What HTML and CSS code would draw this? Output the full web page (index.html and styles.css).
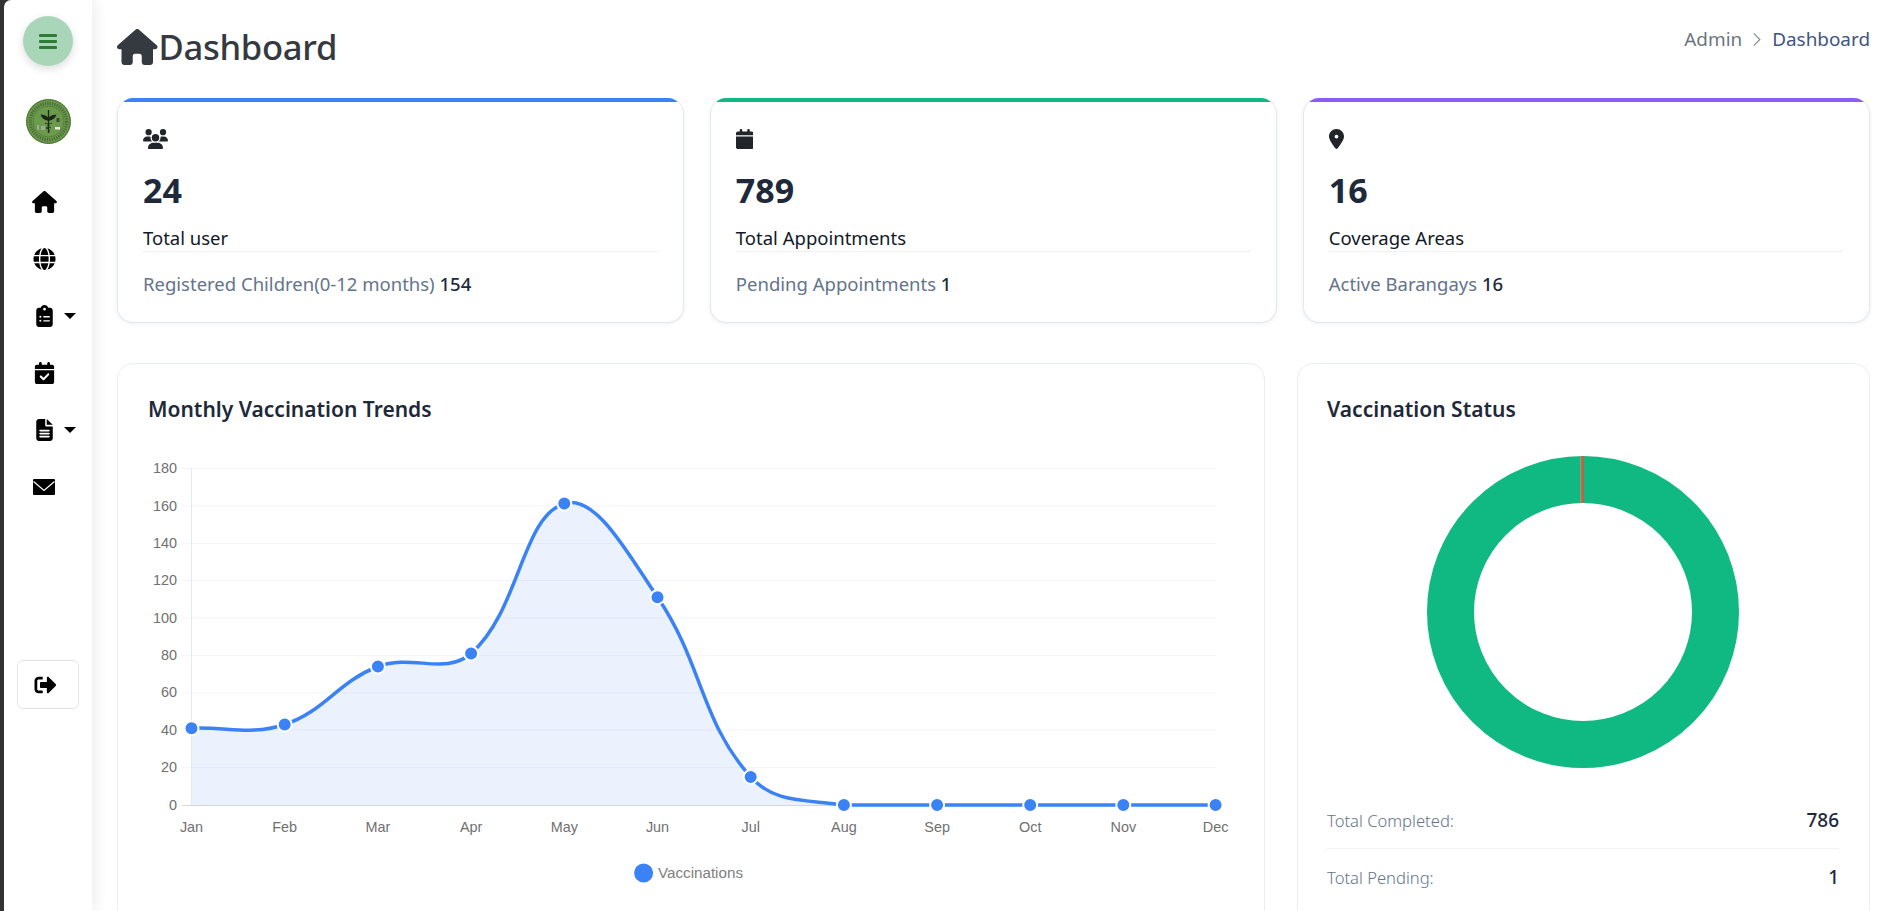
FILE: index.html
```html
<!doctype html>
<html lang="en-US">
<head>
	<meta charset="utf-8">
	<title>Dashboard</title>
	<link rel="stylesheet" href="styles.css">
</head>
<body>
<div class="app">
	<aside class="side">
		<button class="menu-btn"><i></i><i></i><i></i></button>
		<svg class="seal" viewBox="0 0 45 45">
			<circle cx="22.5" cy="22.5" r="22.5" fill="#6b9a4c"/>
			<circle cx="22.5" cy="22.5" r="21.8" fill="none" stroke="#4a6b35" stroke-width=".9"/>
			<circle cx="22.5" cy="22.5" r="18.200" fill="none" stroke="#2f4a26" stroke-width="3.400" stroke-dasharray="1.300 1.100" opacity=".55"/>
			<circle cx="22.5" cy="22.5" r="15.500" fill="#6b9a4c" stroke="#4a6b35" stroke-width=".6"/>
			<path d="M22.5 11v23" stroke="#1c2a18" stroke-width="1.300"/>
			<path d="M14.500 15.500c3 0 5.800 1 8 3c2.200-2 5-3 8-3c-1 3.500-3.500 5.500-8 6.500c-4.500-1-7-3-8-6.500z" fill="#1c2a18"/>
			<path d="M19 24c5 1.500 5 3.500 1 5c3 1 4 2 2.500 4M26 24c-5 1.500-5 3.500-1 5" fill="none" stroke="#1c2a18" stroke-width=".9"/>
			<path d="M11 26h2v5h-2zM15 27h4v4h-4z" fill="#a0ab96"/>
			<path d="M29 28h5v2.500h-5z" fill="#e6ecdd"/>
			<path d="M30.500 19h3v4h-3z" fill="#3a4c31"/>
		</svg>
		<nav class="nav">
			<a><svg class="ico" viewBox="0 0 576 512"><path d="M575.8 255.500c0 18-15 32.100-32 32.100h-32l.7 160.200c0 2.700-.2 5.400-.5 8.100V472c0 22.100-17.900 40-40 40H456c-1.100 0-2.200 0-3.300-.1c-1.400 .1-2.800 .1-4.200 .1H416 392c-22.100 0-40-17.900-40-40V448 384c0-17.700-14.300-32-32-32H256c-17.700 0-32 14.300-32 32v64 24c0 22.100-17.900 40-40 40H160 128.100c-1.500 0-3-.1-4.500-.2c-1.200 .1-2.400 .2-3.600 .2H104c-22.100 0-40-17.900-40-40V360c0-.9 0-1.900 .1-2.800V287.600H32c-18 0-32-14-32-32.100c0-9 3-17 10-24L266.400 8c7-7 15-8 22-8s15 2 21 7L564.800 231.500c8 7 12 15 11 24z"/></svg></a>
			<a><svg class="ico" viewBox="0 0 512 512"><path d="M352 256c0 22.200-1.200 43.600-3.300 64H163.300c-2.200-20.400-3.300-41.800-3.300-64s1.200-43.600 3.300-64H348.700c2.200 20.400 3.300 41.800 3.300 64zm28.800-64H503.900c5.300 20.500 8.100 41.900 8.100 64s-2.800 43.500-8.100 64H380.800c2.100-20.600 3.200-42 3.200-64s-1.100-43.400-3.200-64zm112.600-32H376.700c-10-63.900-29.800-117.400-55.300-151.600c78.300 20.700 142 77.500 171.900 151.600zm-149.100 0H167.700c6.100-36.400 15.500-68.600 27-94.700c10.500-23.600 22.200-40.700 33.500-51.500C239.400 3.200 248.700 0 256 0s16.600 3.200 27.800 13.800c11.300 10.800 23 27.900 33.500 51.500c11.600 26 20.900 58.200 27 94.700zm-209 0H18.600C48.600 85.900 112.200 29.100 190.600 8.400C165.100 42.600 145.300 96.100 135.300 160zM8.100 192H131.200c-2.100 20.600-3.200 42-3.200 64s1.100 43.400 3.200 64H8.100C2.800 299.500 0 278.100 0 256s2.800-43.500 8.100-64zM194.700 446.600c-11.600-26-20.900-58.200-27-94.600H344.300c-6.100 36.400-15.500 68.600-27 94.600c-10.500 23.600-22.200 40.700-33.500 51.500C272.600 508.800 263.300 512 256 512s-16.600-3.200-27.800-13.800c-11.300-10.800-23-27.900-33.500-51.500zM135.300 352c10 63.900 29.800 117.400 55.300 151.600C112.200 482.900 48.600 426.100 18.600 352H135.300zm358.100 0c-30 74.100-93.600 130.900-171.900 151.600c25.500-34.200 45.200-87.700 55.300-151.600H493.400z"/></svg></a>
			<a><svg class="ico" viewBox="0 0 384 512"><path d="M192 0c-41.800 0-77.400 26.700-90.500 64H64C28.700 64 0 92.700 0 128V448c0 35.300 28.700 64 64 64H320c35.300 0 64-28.700 64-64V128c0-35.300-28.700-64-64-64H282.500C269.400 26.700 233.800 0 192 0zm0 64a32 32 0 1 1 0 64 32 32 0 1 1 0-64zM72 272a24 24 0 1 1 48 0 24 24 0 1 1 -48 0zm104-16H304c8.800 0 16 7.200 16 16s-7.200 16-16 16H176c-8.800 0-16-7.200-16-16s7.200-16 16-16zM72 368a24 24 0 1 1 48 0 24 24 0 1 1 -48 0zm88 0c0-8.800 7.200-16 16-16H304c8.800 0 16 7.200 16 16s-7.200 16-16 16H176c-8.800 0-16-7.200-16-16z"/></svg><b class="caret"></b></a>
			<a><svg class="ico" viewBox="0 0 448 512"><path d="M128 0c17.700 0 32 14.300 32 32V64H288V32c0-17.700 14.300-32 32-32s32 14.300 32 32V64h48c26.500 0 48 21.500 48 48v48H0V112C0 85.500 21.500 64 48 64H96V32c0-17.700 14.300-32 32-32zM0 192H448V464c0 26.500-21.500 48-48 48H48c-26.500 0-48-21.500-48-48V192zM329 305c9.400-9.400 9.400-24.600 0-33.900s-24.600-9.400-33.900 0l-95 95-47-47c-9.400-9.400-24.600-9.400-33.900 0s-9.400 24.600 0 33.900l64 64c9.400 9.400 24.600 9.400 33.900 0L329 305z"/></svg></a>
			<a><svg class="ico" viewBox="0 0 384 512"><path d="M64 0C28.700 0 0 28.700 0 64V448c0 35.300 28.700 64 64 64H320c35.300 0 64-28.700 64-64V176H240c-17.700 0-32-14.300-32-32V0H64zM244 0V132H384L244 0zM88 250H296c11 0 20 9 20 20s-9 20-20 20H88c-11 0-20-9-20-20s9-20 20-20zm0 70H296c11 0 20 9 20 20s-9 20-20 20H88c-11 0-20-9-20-20s9-20 20-20zm0 70H296c11 0 20 9 20 20s-9 20-20 20H88c-11 0-20-9-20-20s9-20 20-20z"/></svg><b class="caret"></b></a>
			<a><svg class="mail" viewBox="0 0 22 16"><rect width="22" height="16" rx="1"/><path d="M.5 2.500L11 11.500L21.500 2.500" fill="none" stroke="#fff" stroke-width="1.200"/></svg></a>
		</nav>
		<button class="logout"><svg class="ico" viewBox="0 0 512 512"><path d="M497 273L329 441c-15 15-41 4.500-41-17v-96H152c-13.300 0-24-10.700-24-24v-96c0-13.300 10.700-24 24-24h136V88c0-21.400 25.900-32 41-17l168 168c9.300 9.400 9.300 24.600 0 34zM192 436v-40c0-6.600-5.400-12-12-12H96c-17.700 0-32-14.300-32-32V160c0-17.700 14.300-32 32-32h84c6.600 0 12-5.400 12-12V76c0-6.600-5.400-12-12-12H96c-53 0-96 43-96 96v192c0 53 43 96 96 96h84c6.600 0 12-5.400 12-12z"/></svg></button>
	</aside>

	<main class="main">
		<header class="head">
			<h1><svg viewBox="0 0 576 512"><path d="M575.8 255.500c0 18-15 32.100-32 32.100h-32l.7 160.200c0 2.700-.2 5.400-.5 8.100V472c0 22.100-17.900 40-40 40H456c-1.100 0-2.200 0-3.300-.1c-1.400 .1-2.800 .1-4.200 .1H416 392c-22.100 0-40-17.900-40-40V448 384c0-17.700-14.300-32-32-32H256c-17.700 0-32 14.300-32 32v64 24c0 22.100-17.900 40-40 40H160 128.100c-1.500 0-3-.1-4.500-.2c-1.200 .1-2.400 .2-3.600 .2H104c-22.100 0-40-17.900-40-40V360c0-.9 0-1.900 .1-2.800V287.600H32c-18 0-32-14-32-32.100c0-9 3-17 10-24L266.400 8c7-7 15-8 22-8s15 2 21 7L564.800 231.500c8 7 12 15 11 24z"/></svg>Dashboard</h1>
			<div class="crumb">
				<span>Admin</span>
				<svg viewBox="0 0 10 16"><path d="M1.500 1.500L8 8L1.500 14.500" fill="none" stroke="#8b9299" stroke-width="1.400"/></svg>
				<a>Dashboard</a>
			</div>
		</header>

		<section class="stats">
			<div class="stat blue">
				<svg class="stat-ico" viewBox="0 0 640 512"><path d="M144 0a80 80 0 1 1 0 160A80 80 0 1 1 144 0zM512 0a80 80 0 1 1 0 160A80 80 0 1 1 512 0zM0 298.700C0 239.800 47.800 192 106.700 192h42.700c15.900 0 31 3.500 44.600 9.700c-1.300 7.200-1.900 14.700-1.900 22.300c0 38.200 16.800 72.500 43.300 96c-.2 0-.4 0-.7 0H21.300C9.600 320 0 310.400 0 298.700zM405.300 320c-.2 0-.4 0-.7 0c26.600-23.500 43.300-57.800 43.300-96c0-7.600-.7-15-1.900-22.300c13.600-6.300 28.700-9.700 44.600-9.700h42.700C592.200 192 640 239.800 640 298.700c0 11.800-9.600 21.300-21.300 21.300H405.300zM224 224a96 96 0 1 1 192 0 96 96 0 1 1 -192 0zM128 485.300C128 411.700 187.700 352 261.300 352H378.700C452.300 352 512 411.700 512 485.300c0 14.700-11.900 26.700-26.700 26.700H154.700c-14.700 0-26.700-11.900-26.700-26.700z"/></svg>
				<div class="num">24</div>
				<div class="lbl">Total user</div>
				<div class="sub">Registered Children(0-12 months) <b>154</b></div>
			</div>
			<div class="stat green">
				<svg class="stat-ico" viewBox="0 0 448 512"><path d="M96 32V64H48C21.500 64 0 85.500 0 112v48H448V112c0-26.500-21.500-48-48-48H352V32c0-17.700-14.300-32-32-32s-32 14.300-32 32V64H160V32c0-17.700-14.300-32-32-32S96 14.300 96 32zM448 192H0V464c0 26.500 21.500 48 48 48H400c26.500 0 48-21.500 48-48V192z"/></svg>
				<div class="num">789</div>
				<div class="lbl">Total Appointments</div>
				<div class="sub">Pending Appointments <b>1</b></div>
			</div>
			<div class="stat purple">
				<svg class="stat-ico" viewBox="0 0 384 512"><path d="M215.700 499.200C267 435 384 279.400 384 192C384 86 298 0 192 0S0 86 0 192c0 87.400 117 243 168.300 307.200c12.300 15.300 35.100 15.300 47.400 0zM192 144a48 48 0 1 1 0 96 48 48 0 1 1 0-96z"/></svg>
				<div class="num">16</div>
				<div class="lbl">Coverage Areas</div>
				<div class="sub">Active Barangays <b>16</b></div>
			</div>
		</section>

		<section class="charts">
			<div class="panel">
				<h2>Monthly Vaccination Trends</h2>
				<svg class="line-chart" viewBox="148 450 1086 460">
					<g class="grid">
						<path d="M182 468.500H1216M182 506H1216M182 543.500H1216M182 580.500H1216M182 618H1216M182 655.500H1216M182 693H1216M182 730H1216M182 767.500H1216"/>
					</g>
					<path class="area" d="M191.500 805L191.500 728.200C228.800 726.700 250.500 735.800 284.700 724.500C325 711.200 337.700 681.800 377.900 666.500C412.300 653.400 445.200 676.100 471.100 653.400C519.700 610.900 521.700 516.500 564.300 503.600C596.200 494 628 554 657.500 597.200C702.600 663.300 700.400 720.800 750.700 776.900C774.900 803.900 805.800 799.300 843.900 805Z"/>
					<path class="axis-y" d="M191.500 468V805.500"/>
					<path class="axis-x" d="M182 805.500H1216"/>
					<path class="curve" d="M191.500 728.200C228.800 726.700 250.500 735.800 284.700 724.500C325 711.200 337.700 681.800 377.900 666.500C412.300 653.400 445.200 676.100 471.100 653.400C519.700 610.900 521.700 516.500 564.300 503.600C596.200 494 628 554 657.500 597.200C702.600 663.300 700.400 720.800 750.700 776.900C774.900 803.900 805.800 799.300 843.900 805L1215.600 805"/>
					<g class="dots">
						<circle cx="191.500" cy="728.200" r="7"/><circle cx="284.700" cy="724.500" r="7"/><circle cx="377.900" cy="666.500" r="7"/><circle cx="471.100" cy="653.400" r="7"/><circle cx="564.300" cy="503.600" r="7"/><circle cx="657.500" cy="597.200" r="7"/><circle cx="750.700" cy="776.900" r="7"/><circle cx="843.900" cy="805" r="7"/><circle cx="937.100" cy="805" r="7"/><circle cx="1030.200" cy="805" r="7"/><circle cx="1123.300" cy="805" r="7"/><circle cx="1215.600" cy="805" r="7"/>
					</g>
					<g class="ticks-y">
						<text x="177" y="473">180</text><text x="177" y="510.500">160</text><text x="177" y="548">140</text><text x="177" y="585">120</text><text x="177" y="622.500">100</text><text x="177" y="660">80</text><text x="177" y="697">60</text><text x="177" y="735">40</text><text x="177" y="772">20</text><text x="177" y="810">0</text>
					</g>
					<g class="ticks-x">
						<text x="191.500" y="832">Jan</text><text x="284.700" y="832">Feb</text><text x="377.900" y="832">Mar</text><text x="471.100" y="832">Apr</text><text x="564.300" y="832">May</text><text x="657.500" y="832">Jun</text><text x="750.700" y="832">Jul</text><text x="843.900" y="832">Aug</text><text x="937.100" y="832">Sep</text><text x="1030.200" y="832">Oct</text><text x="1123.300" y="832">Nov</text><text x="1215.600" y="832">Dec</text>
					</g>
					<circle class="legend-dot" cx="643.600" cy="873" r="9.500"/>
					<text class="legend" x="658" y="878">Vaccinations</text>
				</svg>
			</div>
			<div class="panel">
				<h2>Vaccination Status</h2>
				<svg class="donut" viewBox="0 0 312 312">
					<circle cx="156" cy="156" r="132.500" fill="none" stroke="#10b981" stroke-width="47"/>
					<path d="M154 0V47" stroke="#d9a441" stroke-width="1"/>
					<path d="M155.500 0V47" stroke="#ef4444" stroke-width="2"/>
				</svg>
				<div class="row"><span>Total Completed:</span><b>786</b></div>
				<div class="row"><span>Total Pending:</span><b>1</b></div>
			</div>
		</section>
	</main>
</div>
</body>
</html>
```
FILE: styles.css
```css
*{box-sizing:border-box}
html,body{height:100%}
body{margin:0;overflow:hidden;font-family:"Noto Sans","Open Sans",sans-serif;color:#1e293b;background:#fff}
svg{display:block}
.app{display:flex;height:911px;overflow:hidden;background:#343434}

.side{position:relative;z-index:1;flex:0 0 88px;margin-left:4px;padding:16px 0 0 19px;border-radius:7px 0 0 0;background:#fff;box-shadow:4px 0 14px rgba(0,0,0,.07)}
.menu-btn{display:flex;flex-direction:column;align-items:center;justify-content:center;gap:3px;padding:0;border:0;width:50px;height:50px;border-radius:50%;background:#a9d6b9;box-shadow:0 3px 8px rgba(0,0,0,.14)}
.menu-btn i{display:block;width:18px;height:3px;border-radius:1px;background:#2e7d32}
.seal{margin:33px 0 0 3px;width:45px;height:45px}
.nav{margin:29.500px 0 0 -19px}
.nav a{display:flex;align-items:center;height:57px;padding-left:28px;color:#000}
.ico{height:22px;width:25px;fill:currentColor}
.mail{width:22px;height:16px;margin-left:1px}
.caret{margin-left:7px;border-style:solid;border-width:6px 6px 0;border-color:#000 transparent transparent}
.logout{display:flex;align-items:center;justify-content:center;margin:144.500px 0 0 -6px;padding:0 5px 0 0;width:62px;height:49px;border:1px solid #e4e4e4;border-radius:6px;background:#fff;color:#000}

.main{flex:1;min-width:0;padding:0 22px 0 25px;background:#fff}
.head{display:flex;justify-content:space-between;height:97.500px}
.head h1{display:flex;align-items:center;margin:29px 0 0;height:36px;font-size:34.600px;line-height:36px;font-weight:500;letter-spacing:-.3px;color:#343a40}
.head h1 svg{width:40.500px;height:36px;margin-right:1px;fill:#343a40}
.crumb{display:flex;align-items:center;gap:10px;margin-top:26px;height:26px;font-size:18.900px;color:#6c757d}
.crumb svg{width:10px;height:15px}
.crumb a{color:#3f5482}

.stats{display:grid;grid-template-columns:repeat(3,1fr);gap:25.600px}
.stat{position:relative;overflow:hidden;height:225px;padding:31.500px 25.500px 0 25px;border:1px solid #e2e8f0;border-top:0;border-radius:16px;background:#fff;box-shadow:0 1px 4px rgba(30,41,59,.07)}
.stat::before{content:"";position:absolute;top:0;left:0;right:0;height:4px}
.blue::before{background:#3b82f6}
.green::before{background:#10b981}
.purple::before{background:#8b5cf6}
.stat-ico{height:20px;width:auto;fill:#212529}
.num{margin-top:20px;font-size:34px;line-height:42px;font-weight:700;color:#1e293b}
.lbl{margin-top:13.500px;height:27px;border-bottom:1px solid #eef0f4;font-size:18.500px;line-height:26px;color:#111827}
.sub{margin-top:19.500px;font-size:18.500px;line-height:26px;color:#64748b}
.sub b{font-weight:500;color:#1e293b}

.charts{display:grid;grid-template-columns:2fr 1fr;gap:32px;margin-top:40px}
.panel{padding:31px 30px 30px;border:1px solid #e9edf5;border-radius:16px;background:#fff}
.panel:last-child{padding-left:29px}
.panel h2{margin:0;font-size:21px;line-height:28px;font-weight:600;color:#1e293b}
.line-chart{margin-top:27.500px;width:1086px;height:460px}
.line-chart text{font-family:"Liberation Sans",Arial,sans-serif;font-size:14.400px;fill:#707070}
.line-chart .legend{font-size:15.200px;fill:#808080}
.grid path{fill:none;stroke:#f3f5fa;stroke-width:1}
.area{fill:rgba(59,130,246,.1)}
.axis-y{stroke:#e6e8f0;stroke-width:1;fill:none}
.axis-x{stroke:#d0d7e6;stroke-width:1;fill:none}
.curve{fill:none;stroke:#3b82f6;stroke-width:3.500}
.dots circle{fill:#3b82f6;stroke:#fff;stroke-width:2}
.ticks-y text{text-anchor:end}
.ticks-x text{text-anchor:middle}
.legend-dot{fill:#3b82f6}
.donut{margin:33.500px auto 24px;width:312px;height:312px}
.row{display:flex;justify-content:space-between;align-items:baseline;padding:16px 0;height:56.500px;border-bottom:1px solid #f0f2f6;font-size:16.600px;font-weight:300;line-height:24px;color:#64748b}
.row:last-child{border-bottom:0}
.row b{font-size:19px;font-weight:500;color:#1e293b}
```
